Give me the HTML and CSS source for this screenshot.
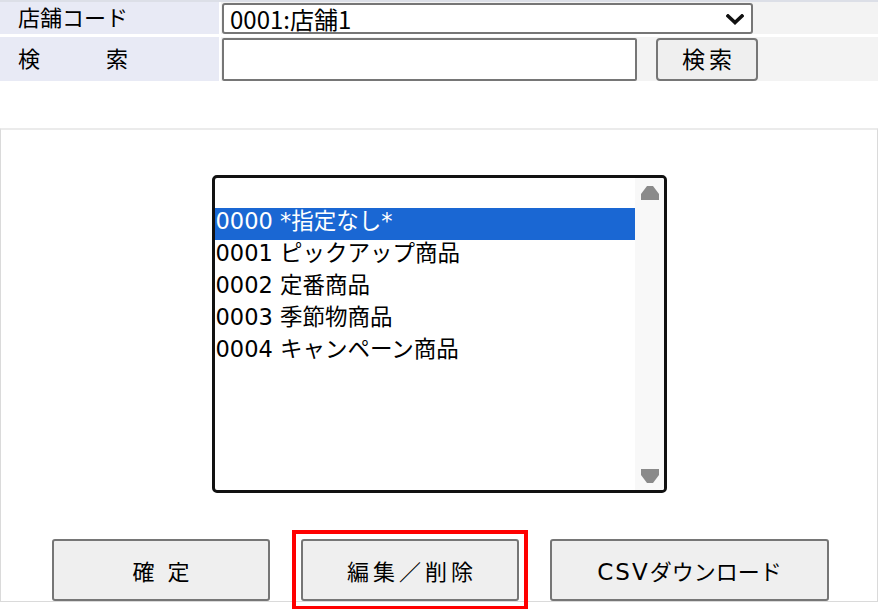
FILE: index.html
```html
<!DOCTYPE html>
<html lang="ja">
<head>
<meta charset="utf-8">
<title>商品分類選択</title>
<link rel="stylesheet" href="styles.css">
</head>
<body>
<div class="topbar"></div>
<div class="form">
  <div class="label">店舗コード</div>
  <div class="value">
    <div class="select">
      <span class="select-text">0001:店舗1</span>
      <svg class="chevron" width="18" height="11" viewBox="0 0 18 11"><path d="M2 2 L9 8.5 L16 2" fill="none" stroke="#111" stroke-width="3.6" stroke-linecap="square"/></svg>
    </div>
  </div>
  <div class="label label-tall">検　　　索</div>
  <div class="value value-tall">
    <div class="input"></div>
    <button class="btn btn-search">検索</button>
  </div>
</div>
<div class="panel">
  <div class="listbox">
    <div class="options">
      <div class="opt opt-empty"></div>
      <div class="opt selected">0000 *指定なし*</div>
      <div class="opt">0001 ピックアップ商品</div>
      <div class="opt">0002 定番商品</div>
      <div class="opt">0003 季節物商品</div>
      <div class="opt">0004 キャンペーン商品</div>
    </div>
    <div class="scrollbar">
      <svg width="18" height="14" viewBox="0 0 18 14"><path d="M6 0 H12 L18 8 V14 H0 V8 Z" fill="#8a8a8a"/></svg>
      <svg width="18" height="14" viewBox="0 0 18 14"><path d="M0 0 H18 V6 L12 14 H6 L0 6 Z" fill="#8a8a8a"/></svg>
    </div>
  </div>
  <div class="actions">
    <button class="btn btn-action btn-confirm">確 定</button>
    <button class="btn btn-action btn-edit highlight">編集／削除</button>
    <button class="btn btn-action btn-csv"><span class="latin">CSV</span>ダウンロード</button>
  </div>
</div>
</body>
</html>
```
FILE: styles.css
```css
html, body {
  margin: 0;
  padding: 0;
  background: #ffffff;
}
body {
  width: 878px;
  height: 609px;
  overflow: hidden;
  font-family: "Noto Sans CJK JP", "Noto Sans", sans-serif;
  color: #000;
}
.topbar {
  height: 2px;
  background: #dcdfe7;
}
.form {
  display: grid;
  grid-template-columns: 219px 1fr;
  grid-template-rows: 32px 44px;
  column-gap: 2px;
  row-gap: 3px;
}
.label {
  background: #e8eaf5;
  font-size: 22px;
  line-height: 28px;
  padding: 0 0 4px 18px;
  white-space: pre;
}
.label-tall {
  line-height: 40px;
  padding-bottom: 4px;
}
.value {
  background: #f3f3f3;
  padding-left: 1px;
  display: flex;
  align-items: flex-start;
}
.select {
  box-sizing: border-box;
  margin-top: 1px;
  width: 531px;
  height: 31px;
  background: #fff;
  border: 2px solid #767676;
  border-radius: 3px;
  display: flex;
  align-items: center;
  justify-content: space-between;
  padding: 0 7px 0 6px;
}
.select-text {
  font-size: 24px;
  line-height: 27px;
}
.chevron {
  display: block;
  margin-top: 1px;
}
.value-tall {
  padding-top: 1px;
}
.input {
  box-sizing: border-box;
  width: 415px;
  height: 43px;
  background: #fff;
  border: 2px solid #767676;
  border-radius: 2px;
}
.btn {
  box-sizing: border-box;
  background: #efefef;
  border: 2px solid #767676;
  border-radius: 4px;
  font-family: "Noto Sans CJK JP", "Noto Sans", sans-serif;
  font-size: 22px;
  color: #000;
  padding: 0;
  margin: 0;
}
.btn-search {
  margin-left: 19px;
  width: 102px;
  height: 43px;
  font-size: 23px;
  letter-spacing: 4px;
  padding-left: 4px;
  line-height: 36px;
  padding-bottom: 3px;
}
.panel {
  box-sizing: border-box;
  margin-top: 47px;
  height: 474px;
  border: 1px solid #dadada;
  border-top: 2px solid #ebebeb;
  display: flex;
  flex-direction: column;
  align-items: center;
}
.listbox {
  box-sizing: border-box;
  margin-top: 45px;
  width: 455px;
  height: 318px;
  border: 3px solid #111;
  border-radius: 5px;
  display: flex;
  overflow: hidden;
}
.options {
  width: 420px;
  font-family: "DejaVu Sans", "Noto Sans CJK JP", sans-serif;
  font-size: 22.5px;
}
.opt {
  height: 32px;
  line-height: 27px;
  padding-left: 1px;
  white-space: pre;
}
.opt-empty {
  height: 30px;
}
.opt.selected {
  background: #1a67d3;
  color: #fff;
}
.scrollbar {
  flex: 1;
  background: #f8f8f8;
  display: flex;
  flex-direction: column;
  justify-content: space-between;
  align-items: center;
  padding: 8px 0 7px 2px;
}
.scrollbar svg {
  display: block;
}
.actions {
  margin-top: 46px;
  align-self: stretch;
  display: flex;
  column-gap: 31px;
  padding-left: 51px;
}
.btn-action {
  height: 62px;
  border-radius: 3px;
}
.btn-confirm {
  width: 218px;
  letter-spacing: 4px;
  padding-left: 4px;
}
.btn-edit {
  width: 218px;
  letter-spacing: 4px;
  padding-left: 4px;
}
.btn-csv {
  width: 279px;
}
.latin {
  font-family: "DejaVu Sans", sans-serif;
  font-size: 23px;
  letter-spacing: 2px;
}
.highlight {
  position: relative;
}
.highlight::after {
  content: "";
  position: absolute;
  top: -11px;
  left: -11px;
  right: -11px;
  bottom: -11px;
  border: 4px solid #ff0000;
  pointer-events: none;
}
```
